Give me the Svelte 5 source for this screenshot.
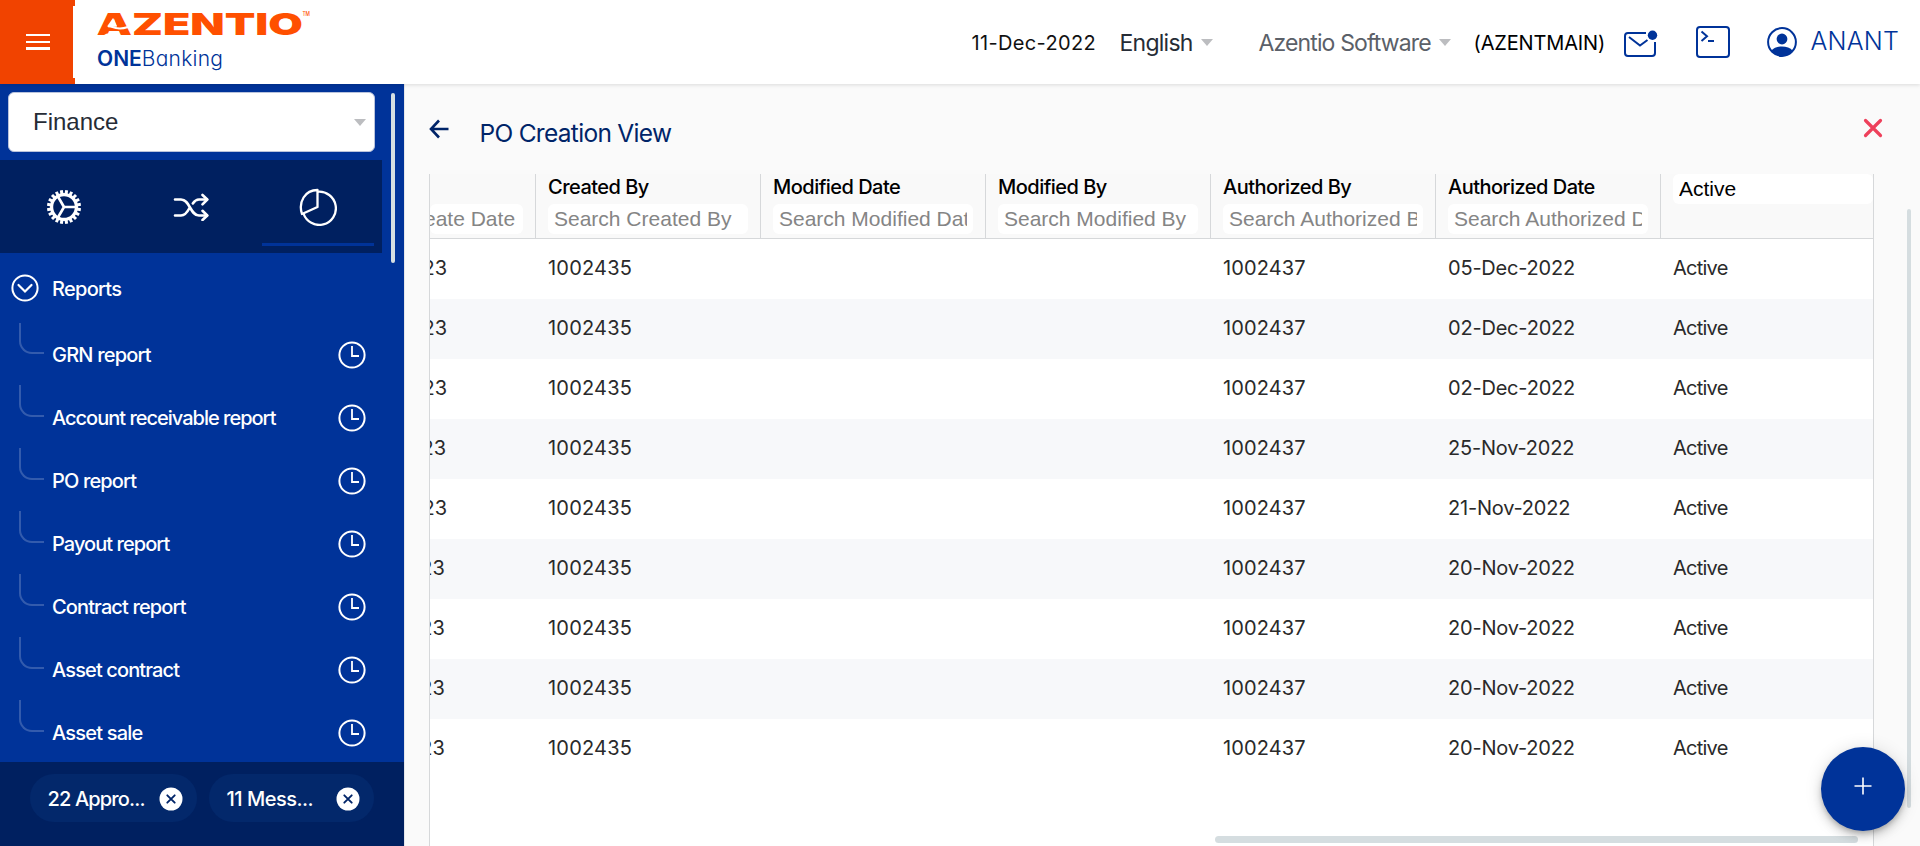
<script>
  const reports = [
    { name: 'GRN report', track: -0.8 },
    { name: 'Account receivable report', track: -1 },
    { name: 'PO report', track: -0.85 },
    { name: 'Payout report', track: -0.95 },
    { name: 'Contract report', track: -0.87 },
    { name: 'Asset contract', track: -0.87 },
    { name: 'Asset sale', track: -0.8 }
  ];
  const columns = ['Created By', 'Modified Date', 'Modified By', 'Authorized By', 'Authorized Date'];
  const rows = [
    ['05-Dec-2022', 0], ['02-Dec-2022', 0], ['02-Dec-2022', 0], ['25-Nov-2022', 1], ['21-Nov-2022', 0],
    ['20-Nov-2022', 2.3], ['20-Nov-2022', 2.3], ['20-Nov-2022', 2.3], ['20-Nov-2022', 2.3]
  ].map(([date, shift]) => ({ date, shift }));
  const chips = [
    { label: '22 Appro...', track: -0.85 },
    { label: '11 Mess...', track: -0.5 }
  ];
  const teeth = Array.from({ length: 20 }, (_, i) => i * 18);
</script>

<div class="app">
  <header>
    <button class="menu" aria-label="Menu"><i></i><i></i><i></i></button>
    <div class="brand">
      <svg class="wordmark" width="216" height="28" viewBox="0 0 216 28">
        <text class="logo" x="-.5" y="25" textLength="206.500" lengthAdjust="spacingAndGlyphs">AZENTIO</text>
        <path d="M10 16.500L16 8L20 16.500Z" fill="#fff" />
        <path d="M11 16.200C16 16.200 17 18.500 23 18.500C26 18.500 28.500 17.800 31 17" fill="none" stroke="#fff" stroke-width="2" />
        <path d="M13 20C17 18 20 19.500 24 21H13Z" fill="#ff5000" />
        <path d="M6.500 25.600C10 22.300 15 22.500 20.500 25.600Z" fill="#fff" />
        <text class="tm" x="205.500" y="5.600" textLength="7.500" lengthAdjust="spacingAndGlyphs">TM</text>
      </svg>
      <div class="product"><b>ONE</b>Banking</div>
    </div>
    <div class="tools">
      <span class="date">11-Dec-2022</span>
      <span class="lang">English</span>
      <i class="caret c1"></i>
      <span class="org">Azentio Software</span>
      <i class="caret c2"></i>
      <span class="branch">(AZENTMAIN)</span>
      <svg class="mail" width="34" height="28" viewBox="0 0 34 28" fill="none" stroke="#039" stroke-width="2">
        <path d="M22 3H4Q1 3 1 6V23Q1 26 4 26H28Q31 26 31 23V12" />
        <path d="M5 7L16 15.500L23.500 10" />
        <circle cx="28.500" cy="5.300" r="4.700" fill="#039" stroke="none" />
      </svg>
      <svg class="term" width="34" height="32" viewBox="0 0 34 32" fill="none" stroke="#039" stroke-width="2">
        <rect x="1" y="1" width="32" height="30" rx="3" />
        <path d="M5.500 5.500L11 10.300L5.500 15M12 15H18" />
      </svg>
      <svg class="face" width="30" height="30" viewBox="0 0 30 30">
        <circle cx="15" cy="15" r="13.900" fill="none" stroke="#039" stroke-width="2" />
        <circle cx="15" cy="12" r="5.400" fill="#039" />
        <path d="M4.500 23.500C8.500 18.200 21.500 18.200 25.500 23.500C20 31.200 10 31.200 4.500 23.500Z" fill="#039" />
      </svg>
      <span class="user">ANANT</span>
    </div>
  </header>

  <div class="body">
    <aside>
      <div class="module"><span>Finance</span><i class="caret"></i></div>
      <nav class="tabs">
        <div class="tab">
          <svg width="36" height="36" viewBox="-18 -18 36 36" fill="none" stroke="#fff">
            <circle r="12.400" stroke-width="3.200" />
            {#each teeth as t}
              <path d="M0 -13V-17" stroke-width="3" transform="rotate({t + 9})" />
            {/each}
            <path d="M0 0H12M0 0L-6 -10.400M0 0L-6 10.400" stroke-width="2.700" />
          </svg>
        </div>
        <div class="tab">
          <svg width="36" height="28" viewBox="0 0 36 28" fill="none" stroke="#fff" stroke-width="2.600" stroke-linecap="round" stroke-linejoin="round">
            <path d="M2 6.500H8C17 6.500 17 22.500 26 22.500H34M2 22.500H8C12.500 22.500 14.700 18.500 16.500 15M19.800 10.500C21.500 8 23.500 6.500 26 6.500H34" />
            <path d="M29.500 2L34.300 6.500L29.500 11.300M29.500 17.800L34.300 22.500L29.500 27" />
          </svg>
        </div>
        <div class="tab on">
          <svg width="38" height="38" viewBox="0 0 38 38" fill="none" stroke="#fff" stroke-width="2.300" stroke-linejoin="round">
            <path d="M18.500 2V19L3 26C-1 14 6 2 18.500 2Z" />
            <path d="M18.500 3.800A16.600 16.600 0 1 1 4.500 25.500" />
          </svg>
        </div>
      </nav>
      <div class="group">
        <svg width="28" height="28" viewBox="0 0 28 28" fill="none" stroke="#fff" stroke-width="2">
          <circle cx="14" cy="14" r="12.600" />
          <path d="M7.500 11L14 17.500L20.500 11" stroke-width="2.200" stroke-linecap="round" />
        </svg>
        <span>Reports</span>
      </div>
      <div class="list">
        {#each reports as r}
          <div class="item">
            <i class="branchline"></i>
            <span style="letter-spacing: {r.track}px">{r.name}</span>
            <svg width="28" height="28" viewBox="0 0 28 28" fill="none" stroke="#fff" stroke-width="2">
              <circle cx="14" cy="14" r="12.600" />
              <path d="M14 5V15H21" stroke-width="1.800" />
            </svg>
          </div>
        {/each}
      </div>
      <div class="chips">
        {#each chips as c}
          <div class="chip">
            <span style="letter-spacing: {c.track}px">{c.label}</span>
            <svg width="24" height="24" viewBox="0 0 24 24">
              <circle cx="12" cy="12" r="11.500" fill="#fff" />
              <path d="M8.300 8.300L15.700 15.700M15.700 8.300L8.300 15.700" stroke="#002468" stroke-width="1.900" stroke-linecap="round" />
            </svg>
          </div>
        {/each}
      </div>
      <i class="sidebar-scroll"></i>
    </aside>

    <main>
      <div class="title">
        <svg class="back" width="20" height="20" viewBox="0 0 20 20" fill="none" stroke="#002468" stroke-width="2.600">
          <path d="M19.500 10H2.500M10 1.500L2 10L10 18.500" />
        </svg>
        <h1>PO Creation View</h1>
        <svg class="close" width="20" height="20" viewBox="0 0 20 20" fill="none" stroke="#ee405b" stroke-width="3.200" stroke-linecap="round">
          <path d="M2.500 2.500L17.500 17.500M17.500 2.500L2.500 17.500" />
        </svg>
      </div>
      <div class="table">
        <div class="row head">
          <div class="cell first"><div class="search"><span>eate Date</span></div></div>
          {#each columns as c}
            <div class="cell">
              <b>{c}</b>
              <div class="search"><span>Search {c}</span></div>
            </div>
          {/each}
          <div class="cell status"><div class="search filled"><span>Active</span></div></div>
        </div>
        {#each rows as r}
          <div class="row">
            <div class="cell first"><span style="margin-left: {-7.5 - r.shift}px">23</span></div>
            <div class="cell num">1002435</div>
            <div class="cell"></div>
            <div class="cell"></div>
            <div class="cell last-num">1002437</div>
            <div class="cell day">{r.date}</div>
            <div class="cell status">Active</div>
          </div>
        {/each}
      </div>
      <i class="scroll-x"></i>
      <i class="scroll-y"></i>
      <button class="fab" aria-label="Add">
        <svg width="18" height="18" viewBox="0 0 18 18" stroke="#fff" stroke-width="1.600"><path d="M9 .5V17.500M.5 9H17.500" /></svg>
      </button>
    </main>
  </div>
</div>

<style>
  :global(body) { margin: 0; background: #fafafa; }
  .app { width: 1920px; height: 846px; overflow: hidden; display: flex; flex-direction: column; font-family: Inter, sans-serif; font-size: 20px; }
  button { border: 0; padding: 0; }
  svg { display: block; flex: none; }

  header { position: relative; z-index: 2; flex: none; height: 84px; display: flex; background: #fff; box-shadow: 0 1px 4px rgba(0, 0, 0, .13); }
  .menu { width: 75px; height: 84px; box-sizing: border-box; padding: 34px 25px 0 26px; display: flex; flex-direction: column; gap: 4.300px; background: linear-gradient(#fff, #fff) 73px 6px / 2px 72px no-repeat #f14300; }
  .menu i { height: 2.400px; flex: none; background: #fff; }
  .brand { padding: 10px 0 0 22px; width: 220px; }
  .wordmark { overflow: visible; }
  .logo { font: 900 30px Inter, sans-serif; fill: #ff5000; }
  .tm { font: 500 5.500px Inter, sans-serif; fill: #ff5000; }
  .product { margin-top: 7.500px; font-size: 21px; line-height: 26px; font-weight: 300; letter-spacing: .25px; color: #039; font-feature-settings: 'cv11'; }
  .product b { font-weight: 600; letter-spacing: 0; }
  .tools { margin-left: auto; display: flex; align-items: center; height: 85px; padding-right: 19.500px; white-space: nowrap; }
  .tools span { flex: none; box-sizing: border-box; }
  .date { width: 148px; letter-spacing: .35px; color: #111; }
  .lang { width: 81px; font-size: 23px; letter-spacing: -.75px; color: #262c36; }
  .org { width: 180px; font-size: 23px; letter-spacing: -.87px; color: #5b6068; }
  .branch { width: 150.500px; letter-spacing: -.15px; color: #000; }
  .user { width: 90px; font-size: 25px; font-weight: 300; letter-spacing: .2px; color: #039; padding-bottom: 3px; }
  .caret { width: 0; height: 0; flex: none; border: 6.500px solid transparent; border-top: 7px solid #bcbdc0; border-bottom: 0; }
  .c1 { margin-right: 46px; }
  .c2 { margin-right: 23px; }
  .mail { margin: 2px 38px 0 0; }
  .term { margin: -1px 37px 0 0; }
  .face { margin: -1px 13.500px 0 0; }

  .body { flex: 1; min-height: 0; display: flex; }
  aside { position: relative; flex: none; width: 404px; display: flex; flex-direction: column; background: #039; color: #fff; font-weight: 500; }
  .module { margin: 8px 0 8px 8px; width: 367px; height: 60px; box-sizing: border-box; border: 1px solid #b9c3dc; border-radius: 6px; background: #fff; display: flex; align-items: center; justify-content: space-between; padding: 0 8px 0 24px; font: 24px 'Liberation Sans', sans-serif; color: #262c36; }
  .tabs { display: flex; width: 382px; height: 93px; background: #002060; }
  .tab { flex: 1; display: flex; align-items: center; justify-content: center; position: relative; }
  .tab.on::after { content: ''; position: absolute; left: 7px; right: 8px; bottom: 7px; height: 3px; background: #039; }
  .group { display: flex; align-items: center; height: 71px; padding-left: 10.500px; gap: 14px; letter-spacing: -.72px; }
  .group svg { margin-top: -2px; }
  .group span { margin-left: -.5px; }
  .list { flex: 1; min-height: 0; overflow: hidden; margin-top: -1px; padding-bottom: 1px; }
  .item { height: 63px; display: flex; align-items: center; padding: 0 38.500px 0 19px; }
  .item svg { margin-left: auto; }
  .branchline { width: 23px; height: 30px; margin: -33px 8px 0 0; border: 2px solid rgba(255, 255, 255, .2); border-width: 0 0 2px 2px; border-radius: 0 0 0 13px; }
  .chips { flex: none; height: 84px; box-sizing: border-box; background: #002060; padding: 12px 0 0 30px; display: flex; gap: 12px; }
  .chip { width: 167px; height: 48px; box-sizing: border-box; border-radius: 24px; background: #03286b; display: flex; align-items: center; justify-content: space-between; padding: 1px 14px 0 17.500px; }
  .chip + .chip { width: 165px; }
  .sidebar-scroll { position: absolute; left: 391px; top: 9px; width: 4px; height: 170px; border-radius: 2px; background: #d5dfe2; }

  main { position: relative; flex: 1; min-width: 0; display: flex; flex-direction: column; background: #fafafa; border-left: 1px solid #e4e6ea; box-sizing: border-box; }
  .title { height: 90px; flex: none; display: flex; padding: 0 37px 0 24px; }
  .back { margin-top: 34.500px; }
  .close { margin: 34px 0 0 auto; }
  h1 { margin: 33px 0 0 30.500px; font-size: 24.500px; line-height: 32px; font-weight: 400; letter-spacing: -.7px; color: #002468; }
  .table { flex: 1; min-height: 0; overflow: hidden; margin-left: 24px; width: 1445px; box-sizing: border-box; border: 1px solid #d6d8da; border-width: 0 1px; background: #fff; color: #2a2a2a; }
  .row { display: flex; height: 60px; }
  .row:nth-child(odd) { background: #f7f8fa; }
  .cell { flex: none; width: 225px; box-sizing: border-box; padding-left: 12px; line-height: 58px; white-space: nowrap; }
  .cell.first { width: 106px; padding-left: 0; overflow: hidden; }
  .cell.status { width: 212px; letter-spacing: -.75px; }
  .num { letter-spacing: .2px; }
  .last-num { letter-spacing: .1px; }
  .day { letter-spacing: -.2px; }
  .row.head { height: 65px; box-sizing: border-box; background: #f9f9f9; border-bottom: 1px solid #d6d8da; color: #000; }
  .head .cell { border-right: 1px solid #d6d8da; line-height: 26px; }
  .head .cell.status { border-right: 0; letter-spacing: 0; }
  .head b { display: block; height: 30px; font-weight: 500; letter-spacing: -.52px; }
  .search { width: 200px; height: 30px; box-sizing: border-box; padding: 0 6px; border-radius: 6px; background: #fff; font: 21px/30px 'Liberation Sans', sans-serif; color: #858585; }
  .search span { display: block; overflow: hidden; }
  .search.filled { color: #000; }
  .first .search { margin-top: 30px; width: 93px; padding: 0; }
  .first .search span { margin-left: -6px; }

  .scroll-x { position: absolute; left: 810px; bottom: 3px; width: 643px; height: 7px; border-radius: 4px; background: #d5dde0; }
  .scroll-y { position: absolute; right: 9px; top: 125px; width: 4px; height: 599px; border-radius: 2px; background: #d5dde0; }
  .fab { position: absolute; right: 15px; bottom: 15px; width: 84px; height: 84px; box-sizing: border-box; border-radius: 50%; background: #039; display: flex; align-items: center; justify-content: center; padding-bottom: 6px; box-shadow: 0 3px 5px -1px rgba(0, 0, 0, .2), 0 6px 10px rgba(0, 0, 0, .14), 0 1px 18px rgba(0, 0, 0, .12); }
</style>
